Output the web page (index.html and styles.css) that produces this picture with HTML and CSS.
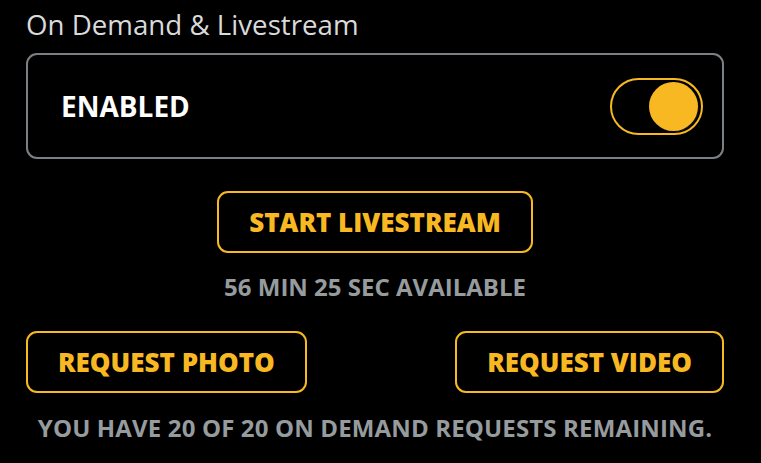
FILE: index.html
```html
<!DOCTYPE html>
<html lang="en">
<head>
    <meta charset="UTF-8">
    <title>On Demand &amp; Livestream</title>
    <link rel="stylesheet" href="styles.css">
</head>
<body>
    <div class="panel">
        <h2 class="title">On Demand &amp; Livestream</h2>
        <div class="card">
            <span class="card-label">ENABLED</span>
            <div class="toggle on"><div class="knob"></div></div>
        </div>
        <div class="center">
            <button class="btn">START LIVESTREAM</button>
        </div>
        <p class="note">56 MIN 25 SEC AVAILABLE</p>
        <div class="row">
            <button class="btn">REQUEST PHOTO</button>
            <button class="btn">REQUEST VIDEO</button>
        </div>
        <p class="note small">YOU HAVE 20 OF 20 ON DEMAND REQUESTS REMAINING.</p>
    </div>
</body>
</html>
```
FILE: styles.css
```css
body {
    margin: 0;
    background: #000;
    font-family: 'Open Sans', sans-serif;
}
.panel {
    width: 698px;
    padding: 0 0 0 26px;
}
.title {
    margin: 0;
    padding-top: 5px;
    font-size: 27.7px;
    line-height: 38px;
    font-weight: normal;
    color: #d9dadb;
}
.card {
    margin-top: 10px;
    height: 106px;
    box-sizing: border-box;
    border: 2px solid #7b8084;
    border-radius: 11px;
    display: flex;
    align-items: center;
    justify-content: space-between;
    padding: 0 19px 0 33px;
}
.card-label {
    color: #fff;
    font-weight: bold;
    font-size: 28px;
}
.toggle {
    width: 93px;
    height: 57px;
    box-sizing: border-box;
    border: 2px solid #f8b822;
    border-radius: 29px;
    display: flex;
    align-items: center;
    justify-content: flex-end;
    padding: 0 3px;
}
.knob {
    width: 49px;
    height: 49px;
    border-radius: 50%;
    background: #f8b822;
    box-shadow: 1px 1px 1px #111;
}
.center {
    display: flex;
    justify-content: center;
    margin-top: 32px;
}
.btn {
    height: 62px;
    padding: 0 30px;
    background: #000;
    border: 2px solid #f8b822;
    border-radius: 11px;
    color: #f8b822;
    font-family: 'Open Sans', sans-serif;
    font-weight: 800;
    font-size: 26px;
}
.note {
    margin: 19px 0 0;
    text-align: center;
    color: #969b9e;
    font-weight: bold;
    font-size: 24px;
    line-height: 30px;
}
.row {
    display: flex;
    justify-content: space-between;
    margin-top: 29px;
}
.note.small {
    margin-top: 20px;
    font-size: 24px;
    letter-spacing: 0.15px;
}
```
